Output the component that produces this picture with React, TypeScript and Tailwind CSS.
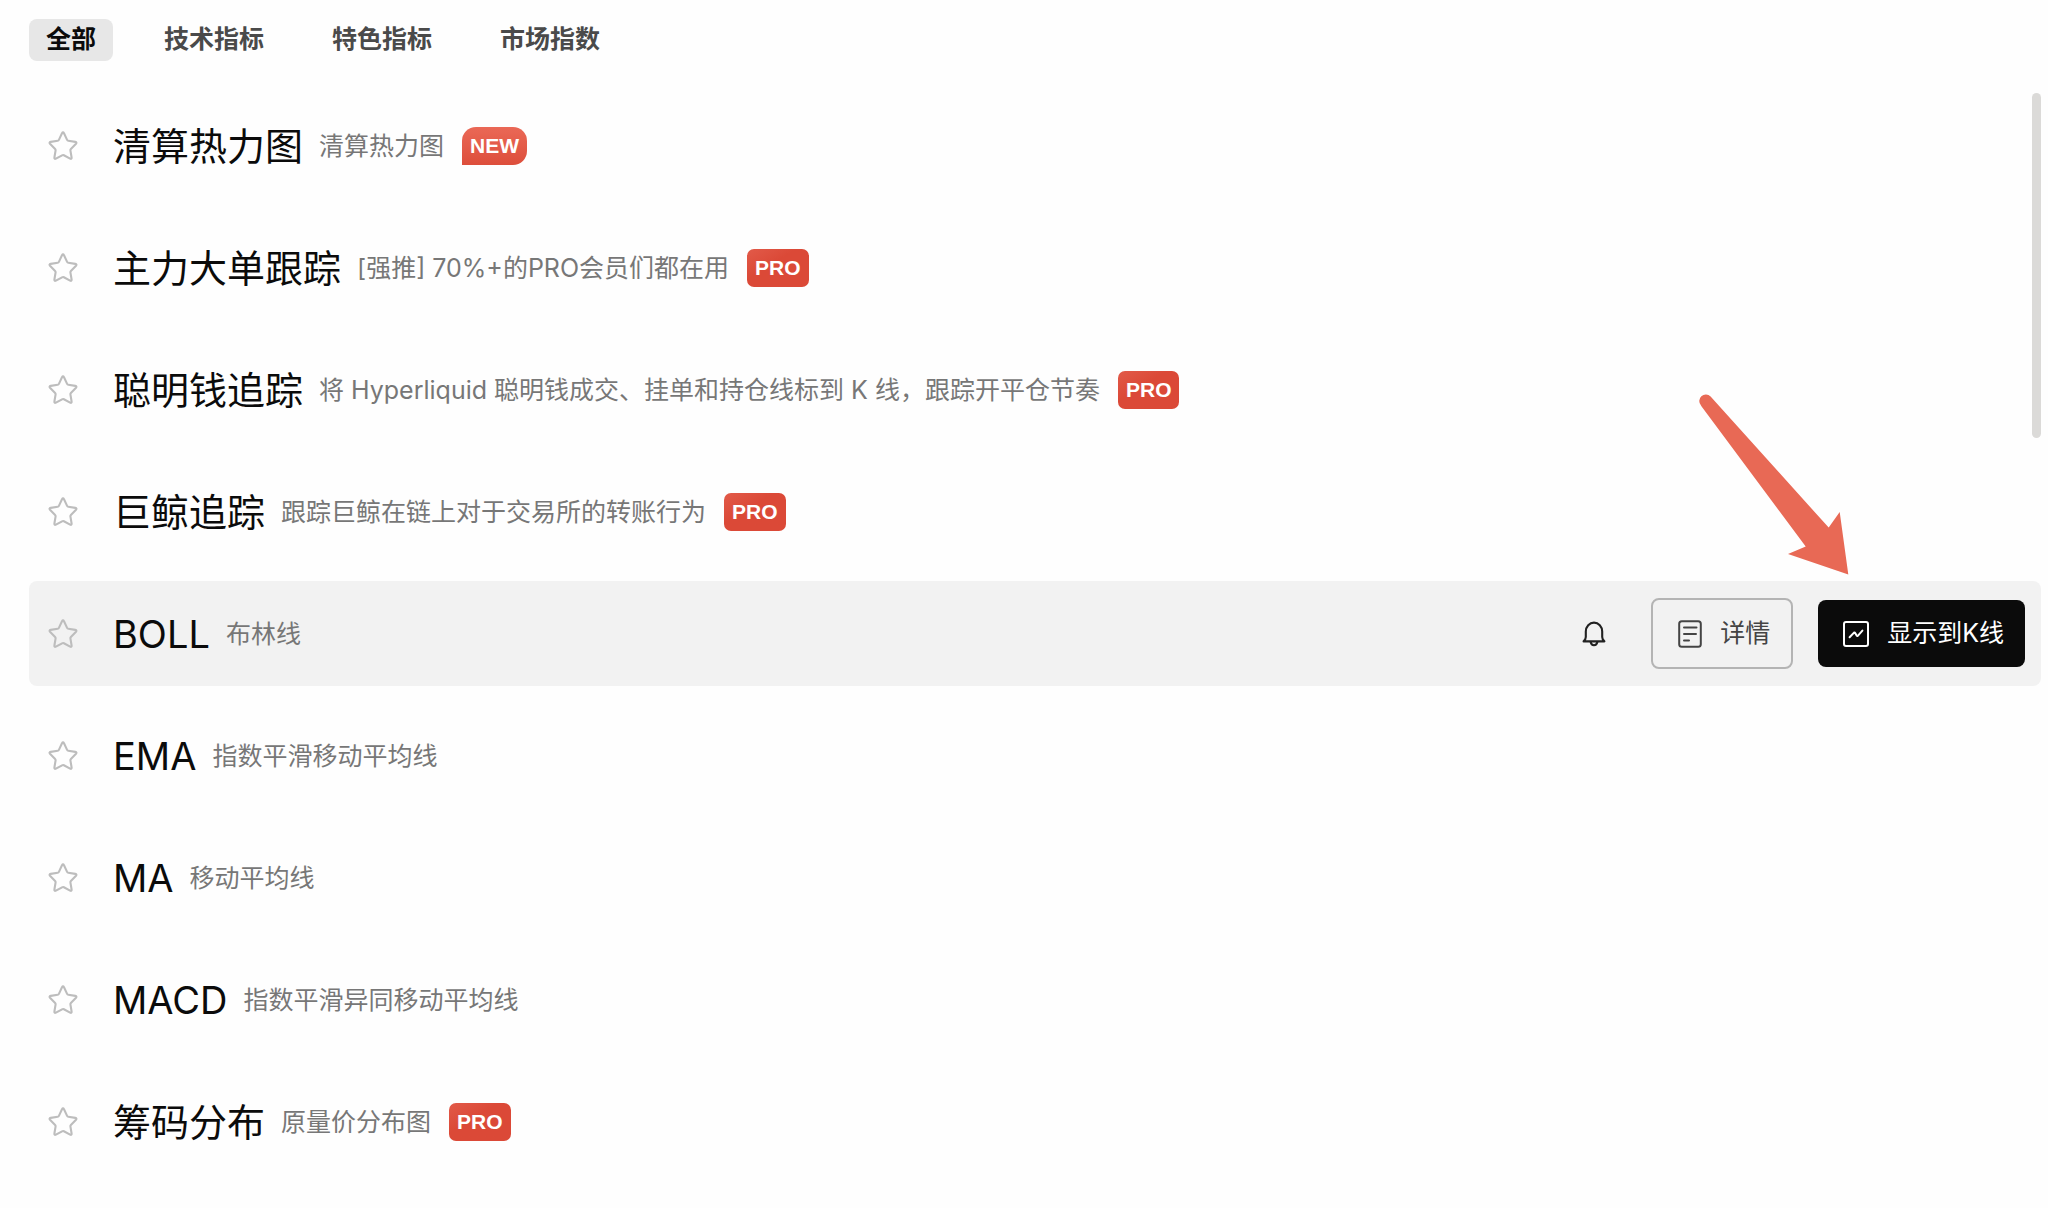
import { useState } from 'react';
import clsx from 'clsx';

type Badge = 'NEW' | 'PRO';

interface Indicator {
  name: string;
  desc: string;
  badge?: Badge;
}

const tabs = ['全部', '技术指标', '特色指标', '市场指数'];

const indicators: Indicator[] = [
  { name: '清算热力图', desc: '清算热力图', badge: 'NEW' },
  { name: '主力大单跟踪', desc: '[强推] 70%+的PRO会员们都在用', badge: 'PRO' },
  { name: '聪明钱追踪', desc: '将 Hyperliquid 聪明钱成交、挂单和持仓线标到 K 线，跟踪开平仓节奏', badge: 'PRO' },
  { name: '巨鲸追踪', desc: '跟踪巨鲸在链上对于交易所的转账行为', badge: 'PRO' },
  { name: 'BOLL', desc: '布林线' },
  { name: 'EMA', desc: '指数平滑移动平均线' },
  { name: 'MA', desc: '移动平均线' },
  { name: 'MACD', desc: '指数平滑异同移动平均线' },
  { name: '筹码分布', desc: '原量价分布图', badge: 'PRO' },
];

function StarIcon() {
  return (
    <svg viewBox="0 0 32 32" className="size-8" fill="none" stroke="currentColor" strokeWidth="2.1" strokeLinejoin="round">
      <path d="M15 3.2q1-1.8 2 0l3.1 6.7q.4.8 1.2.9l7 1.1q1.9.4.7 1.8l-5.1 5.2q-.6.6-.5 1.4l1.2 7.2q.2 1.9-1.5 1.1l-6.2-3.3q-.9-.5-1.8 0l-6.2 3.3q-1.7.8-1.5-1.1l1.2-7.2q.1-.8-.5-1.4l-5.1-5.2q-1.2-1.4.7-1.8l7-1.1q.8-.1 1.2-.9z" />
    </svg>
  );
}

function BellIcon() {
  return (
    <svg viewBox="0 0 24 26" className="h-[26px] w-6" fill="none" stroke="currentColor" strokeWidth="2.1" strokeLinejoin="round">
      <path d="M1.6 20.4q2.2-2 2.2-4.4v-5.4a8.2 9 0 0 1 16.4 0V16q0 2.4 2.2 4.4z" />
      <path d="M8.6 20.8q.6 3.4 3.4 3.4t3.4-3.4" />
    </svg>
  );
}

function DetailIcon() {
  return (
    <svg viewBox="0 0 24 28" className="h-7 w-6" fill="none" stroke="currentColor" strokeWidth="2" strokeLinecap="round">
      <rect x="1.2" y="1.2" width="21.6" height="25.6" rx="2.6" />
      <path d="M6 7.4h12.5M6 13.9h12M6 20.4h5" />
    </svg>
  );
}

function ChartIcon() {
  return (
    <svg viewBox="0 0 26 26" className="size-[26px]" fill="none" stroke="currentColor" strokeWidth="2" strokeLinejoin="round">
      <rect x="1" y="1" width="24" height="24" rx="2" />
      <path d="M6.6 16.2l4.4-4.6q.6-.5 1 .2l1.8 3q.4.6 1 0l4.6-5.2" strokeLinecap="round" />
    </svg>
  );
}

// Hint arrow pointing at the "show on chart" button
function HintArrow() {
  return (
    <svg viewBox="0 0 150 181" className="pointer-events-none absolute right-[176px] bottom-full mb-[25px] h-[181px] w-[150px]" aria-hidden="true">
      <path d="M2 11.5A6.2 6.2 0 0 1 11.6 2.6L129.7 133.6 140.7 118 149.3 180.5 89 160 106.7 152.6 2.6 12.4Q1.4 10.6 2 11.5Z" fill="#e86955" />
    </svg>
  );
}

function BadgeTag({ type }: { type: Badge }) {
  return (
    <span
      className={clsx(
        "flex h-[38px] shrink-0 items-center px-2 font-['Liberation_Sans',sans-serif] text-[21px] font-bold text-white",
        type === 'NEW'
          ? 'rounded-[14px] rounded-bl-none bg-linear-to-b from-[#ea6856] to-[#dd4e3b]'
          : 'rounded-[7px] bg-linear-to-br from-[#e25a49] to-[#db4937] to-40%'
      )}
    >
      {type}
    </span>
  );
}

export default function App() {
  const [activeTab, setActiveTab] = useState('全部');
  const [activeRow, setActiveRow] = useState('BOLL');

  return (
    <div className="min-h-screen bg-[#fefefe] pt-[19px] pr-[7px] pl-[29px] font-['Inter','Noto_Sans_CJK_SC',sans-serif]">
      {/* Category tabs */}
      <nav className="flex gap-[34px]">
        {tabs.map((tab) => (
          <button
            key={tab}
            type="button"
            onClick={() => setActiveTab(tab)}
            className={clsx(
              'flex h-[42px] items-center rounded-lg px-[17px] text-[25px] font-semibold',
              tab === activeTab ? 'bg-[#e7e7e7] text-[#0b0b0b]' : 'text-[#4a4a4a]'
            )}
          >
            {tab}
          </button>
        ))}
      </nav>

      {/* Indicator list */}
      <div className="relative mt-8">
        <ul className="flex flex-col gap-[17px]">
          {indicators.map((item) => (
            <li
              key={item.name}
              onClick={() => setActiveRow(item.name)}
              className={clsx(
                'flex h-[105px] items-center rounded-lg pr-4 pl-[18px]',
                item.name === activeRow && 'bg-[#f2f2f2]'
              )}
            >
              <button type="button" aria-label={`收藏 ${item.name}`} className="shrink-0 text-[#bdbdbd]">
                <StarIcon />
              </button>
              <div className="ml-[34px] flex items-center gap-4 pt-0.5">
                <h3 className="shrink-0 text-[38px] text-[#0b0b0b]">{item.name}</h3>
                <p className="text-[25px] text-[#777777]">{item.desc}</p>
              </div>
              {item.badge && (
                <div className="ml-[18px]">
                  <BadgeTag type={item.badge} />
                </div>
              )}

              {item.name === activeRow && (
                <div className="ml-auto flex shrink-0 items-center">
                  <button type="button" aria-label="提醒" className="mr-[45px] text-[#222222]">
                    <BellIcon />
                  </button>
                  <button
                    type="button"
                    className="mr-[25px] flex h-[71px] items-center gap-[18px] rounded-lg border-2 border-[#b4b4b4] pr-[21px] pl-[25px] text-[25px] text-[#444444]"
                  >
                    <DetailIcon />
                    详情
                  </button>
                  <div className="relative">
                    <button
                      type="button"
                      className="flex h-[67px] items-center gap-[18px] rounded-lg bg-[#0b0b0b] pr-[21px] pl-[25px] text-[25px] text-white"
                    >
                      <ChartIcon />
                      显示到K线
                    </button>
                    <HintArrow />
                  </div>
                </div>
              )}
            </li>
          ))}
        </ul>

        {/* Scroll thumb */}
        <div className="absolute top-0 right-0 h-[345px] w-[9px] rounded-full bg-[#dbdad8]" />
      </div>
    </div>
  );
}
